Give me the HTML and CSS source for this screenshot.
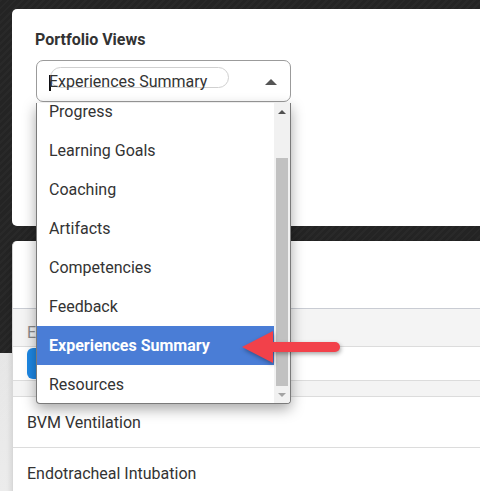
FILE: index.html
```html
<!DOCTYPE html>
<html>
<head>
<meta charset="utf-8">
<link rel="stylesheet" href="styles.css">
</head>
<body>
<div class="page">
  <section class="card card-top">
    <div class="label">Portfolio Views</div>
    <div class="select-wrap">
      <div class="select">
        <span class="caret-line"></span>
        <span class="pill"></span>
        <span class="select-text">Experiences Summary</span>
        <span class="tri"></span>
      </div>
      <div class="menu">
        <div class="menu-viewport">
          <ul class="menu-list">
            <li class="item">Progress</li>
            <li class="item">Learning Goals</li>
            <li class="item">Coaching</li>
            <li class="item">Artifacts</li>
            <li class="item">Competencies</li>
            <li class="item">Feedback</li>
            <li class="item active">Experiences Summary</li>
            <li class="item">Resources</li>
          </ul>
        </div>
        <div class="scrollbar">
          <div class="sb-btn"><span class="sb-up"></span></div>
          <div class="sb-track"><div class="sb-thumb"></div></div>
          <div class="sb-btn"><span class="sb-down"></span></div>
        </div>
      </div>
    </div>
  </section>
  <section class="card card-bottom">
    <div class="head"></div>
    <div class="row row-gray"><span class="muted">E</span></div>
    <div class="row row-btn"><span class="btn"></span></div>
    <div class="row row-thin"></div>
    <div class="row row-item">BVM Ventilation</div>
    <div class="row row-item">Endotracheal Intubation</div>
  </section>
</div>
<svg class="pointer" width="110" height="44" viewBox="236 326 110 44">
  <line x1="268" y1="347" x2="335" y2="347" stroke="#f2414a" stroke-width="10" stroke-linecap="round"/>
  <polygon points="242,347 273,331 273,363" fill="#f2414a"/>
</svg>
</body>
</html>
```

FILE: styles.css
```css
* { box-sizing: border-box; }
html, body { margin: 0; padding: 0; }
body {
  width: 480px;
  height: 491px;
  overflow: hidden;
  font-family: Roboto, "Liberation Sans", sans-serif;
  color: #333;
  background:
    repeating-linear-gradient(135deg, rgba(255,255,255,0.025) 0 2px, rgba(0,0,0,0) 2px 5px),
    linear-gradient(to bottom, #242424 0, #242424 353px, #e6e6e6 353px, #ececec 100%);
  position: relative;
}
.page {
  padding: 9px 0 0 12px;
  display: flex;
  flex-direction: column;
  gap: 15px;
}
.card {
  background: #fff;
}
.card-top {
  height: 217px;
  border-radius: 5px 0 0 5px;
  padding: 22px 0 0 23px;
  position: relative;
  z-index: 5;
}
.label {
  font-size: 16px;
  line-height: 18px;
  font-weight: 700;
  color: #333;
  margin-bottom: 11px;
}
.select-wrap {
  position: relative;
  width: 255px;
  margin-left: 1px;
}
.select {
  height: 42px;
  border: 1.5px solid #9b9b9b;
  border-radius: 7px;
  display: flex;
  align-items: center;
  position: relative;
  padding-left: 12px;
}
.pill {
  position: absolute;
  left: 13px;
  top: 6px;
  width: 179px;
  height: 21px;
  border: 1px solid #d0d0d0;
  border-radius: 11px;
}
.caret-line {
  position: absolute;
  left: 12px;
  top: 14px;
  width: 1.5px;
  height: 16px;
  background: #111;
}
.select-text {
  font-size: 16px;
  line-height: 20px;
  color: #333;
  margin-top: 2px;
  position: relative;
}
.tri {
  position: absolute;
  right: 13px;
  top: 18px;
  width: 0;
  height: 0;
  border-left: 6px solid transparent;
  border-right: 6px solid transparent;
  border-bottom: 6px solid #555;
}
.menu {
  position: absolute;
  left: 0;
  top: 43px;
  width: 255px;
  height: 301px;
  display: flex;
  background: #fff;
  border: 1px solid #7a7a7a;
  border-top: none;
  border-radius: 0 0 4px 4px;
  overflow: hidden;
  box-shadow: 0 5px 14px rgba(0,0,0,0.35);
  z-index: 20;
}
.menu-viewport {
  flex: 1;
  overflow: hidden;
}
.menu-list {
  list-style: none;
  margin: -11px 0 0 0;
  padding: 0;
}
.item {
  height: 39px;
  line-height: 39px;
  padding-left: 12px;
  font-size: 16px;
  color: #333;
  white-space: nowrap;
}
.item.active {
  background: #4a7dd6;
  color: #fff;
  font-weight: 700;
}
.scrollbar {
  width: 16px;
  background: #f1f1f1;
  display: flex;
  flex-direction: column;
}
.sb-btn {
  height: 17px;
  display: flex;
  align-items: center;
  justify-content: center;
}
.sb-up {
  width: 0; height: 0;
  border-left: 4px solid transparent;
  border-right: 4px solid transparent;
  border-bottom: 4px solid #505050;
}
.sb-down {
  width: 0; height: 0;
  border-left: 4px solid transparent;
  border-right: 4px solid transparent;
  border-top: 4px solid #a3a3a3;
}
.sb-track {
  flex: 1;
  display: flex;
  flex-direction: column;
  justify-content: flex-end;
  padding: 0 2px;
}
.sb-thumb {
  height: 228px;
  background: #c1c1c1;
}
.card-bottom {
  height: 260px;
  border-radius: 5px 0 0 0;
  border-left: 1px solid #d8d8d8;
  box-shadow: -2px 0 4px rgba(0,0,0,0.08);
}
.head {
  height: 68px;
  border-bottom: 1px solid #c9ccd3;
  box-shadow: 0 1px 2px rgba(0,0,0,0.06);
}
.row {
  padding-left: 14px;
  border-bottom: 1px solid #dcdcdc;
}
.row-gray {
  height: 38px;
  background: #f4f4f4;
  display: flex;
  align-items: flex-end;
  padding-bottom: 4px;
}
.muted {
  font-size: 16px;
  color: #8a8a8a;
}
.row-btn {
  height: 34px;
  background: #fff;
  padding-top: 1px;
}
.btn {
  display: block;
  width: 80px;
  height: 31px;
  background: #1e88e5;
  border-radius: 6px;
}
.row-thin {
  height: 16px;
  background: #f4f4f4;
}
.row-item {
  height: 51px;
  display: flex;
  align-items: center;
  font-size: 16px;
  color: #333;
  background: #fff;
}
.pointer {
  position: absolute;
  left: 236px;
  top: 326px;
  z-index: 30;
  filter: drop-shadow(1px 2px 2px rgba(0,0,0,0.35));
}
```
